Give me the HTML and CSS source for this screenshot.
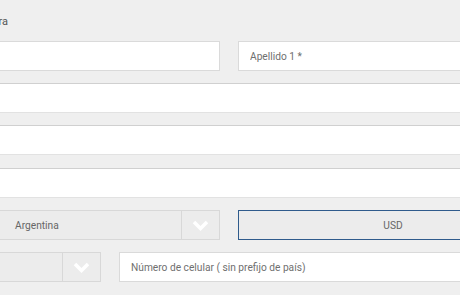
FILE: index.html
```html
<!DOCTYPE html>
<html lang="es">
<head>
    <meta charset="UTF-8">
    <meta name="viewport" content="width=device-width, initial-scale=1.0">
    <title>Registro</title>
    <link rel="stylesheet" href="styles.css">
</head>
<body>
    <form class="signup-form">
        <div class="form-label">Fecha de apertura</div>

        <div class="form-row two-cols">
            <input class="field" type="text" placeholder="Nombre *">
            <input class="field" type="text" placeholder="Apellido 1 *">
        </div>

        <div class="form-row">
            <input class="field wide" type="text">
        </div>
        <div class="form-row">
            <input class="field wide" type="email">
        </div>
        <div class="form-row row-offset">
            <input class="field wide" type="password">
        </div>

        <div class="form-row two-cols">
            <div class="select-box">
                <span class="select-value">Argentina</span>
                <span class="select-arrow">
                    <svg width="17" height="11" viewBox="0 0 17 11"><path d="M2 2 L8.5 8.5 L15 2" fill="none" stroke="#fff" stroke-width="3.5"/></svg>
                </span>
            </div>
            <div class="currency-box">USD</div>
        </div>

        <div class="form-row phone-row">
            <div class="select-box">
                <span class="select-value"></span>
                <span class="select-arrow">
                    <svg width="17" height="11" viewBox="0 0 17 11"><path d="M2 2 L8.5 8.5 L15 2" fill="none" stroke="#fff" stroke-width="3.5"/></svg>
                </span>
            </div>
            <input class="field" type="tel" placeholder="Número de celular ( sin prefijo de país)">
        </div>
    </form>
</body>
</html>
```

FILE: styles.css
```css
body {
    margin: 0;
    background: #efefef;
    font-family: Roboto, 'Liberation Sans', sans-serif;
    color: #555;
    overflow: hidden;
}

.signup-form {
    width: 638px;
    margin-left: -90px;
    padding-top: 15px;
    display: flex;
    flex-direction: column;
    gap: 12px;
}

.form-label {
    font-size: 11px;
    line-height: 14px;
    color: #555;
    text-align: right;
    width: 98px;
    white-space: nowrap;
    overflow: hidden;
    direction: rtl;
}

.form-row {
    display: flex;
}

.row-offset {
    margin-top: 1px;
}

.two-cols {
    display: grid;
    grid-template-columns: 1fr 1fr;
    column-gap: 18px;
}

.phone-row {
    display: grid;
    grid-template-columns: 191px 1fr;
    column-gap: 18px;
}

.field {
    box-sizing: border-box;
    height: 30px;
    width: 100%;
    margin: 0;
    padding: 0 11px;
    border: 1px solid #dadada;
    background: #fff;
    font-family: Roboto, 'Liberation Sans', sans-serif;
    font-size: 10.2px;
    color: #555;
    outline: none;
}

.field::placeholder {
    color: #6f6f6f;
}

.field.wide {
    border-top-color: #d0d0d0;
    border-bottom-color: #e2e2e2;
}

.select-box {
    box-sizing: border-box;
    height: 30px;
    display: flex;
    border: 1px solid #d8d8d8;
    background: #ececec;
}

.select-value {
    flex: 1;
    display: flex;
    align-items: center;
    padding-left: 104px;
    font-size: 10.2px;
    color: #666;
}

.select-arrow {
    width: 37px;
    border-left: 1px solid #d8d8d8;
    display: flex;
    align-items: center;
    justify-content: center;
}

.currency-box {
    box-sizing: border-box;
    height: 30px;
    display: flex;
    align-items: center;
    justify-content: center;
    border: 1px solid #2f5b8c;
    background: #ececec;
    font-size: 10.2px;
    color: #666;
}
```
